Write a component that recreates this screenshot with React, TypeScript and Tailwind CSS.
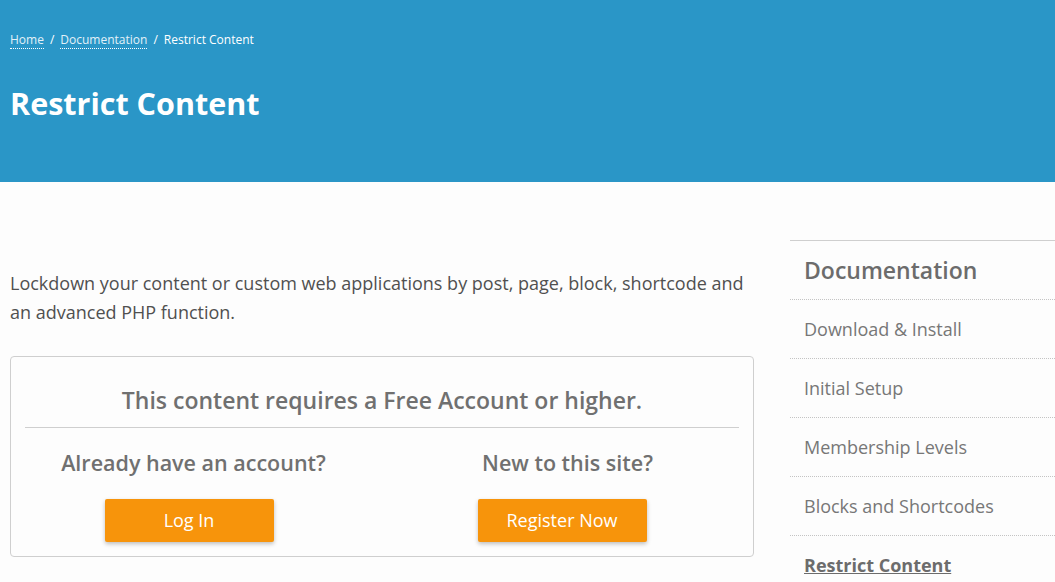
export default function App() {
  const docs = [
    "Download & Install",
    "Initial Setup",
    "Membership Levels",
    "Blocks and Shortcodes",
  ];

  return (
    <div className="min-h-[582px] bg-[#fdfdfd] font-['Open_Sans',sans-serif] text-[#6c6c6c] overflow-hidden">
      <header className="h-[182px] bg-[#2a96c7] px-[10px] pt-[31px]">
        <nav className="flex items-center gap-[6px] text-[12px] text-white">
          <a href="#" className="border-b border-dotted border-white text-[#e3f1f8] leading-[16px]">
            Home
          </a>
          <span>/</span>
          <a href="#" className="border-b border-dotted border-white text-[#e3f1f8] leading-[16px]">
            Documentation
          </a>
          <span>/</span>
          <span>Restrict Content</span>
        </nav>
        <h1 className="mt-[34px] text-[30.5px] font-bold leading-[40px] text-white">Restrict Content</h1>
      </header>

      <div className="flex pt-[58px]">
        <main className="w-[744px] ml-[10px] pt-[29px]">
          <p className="text-[18px] leading-[29px] text-[#505050]">
            Lockdown your content or custom web applications by post, page, block, shortcode and an advanced PHP
            function.
          </p>

          <div className="mt-[29px] h-[201px] rounded-[4px] border border-[#cfcfcf] px-[14px] pt-[26px]">
            <h2 className="text-center text-[23px] font-semibold leading-[34px] text-[#707070]">
              This content requires a Free Account or higher.
            </h2>
            <div className="mt-[10px] border-t border-[#cfcfcf]" />
            <div className="flex -mx-[14px]">
              <div className="flex w-1/2 flex-col items-center pt-[20px]">
                <h3 className="pr-[6px] text-[21.5px] font-semibold leading-[30px] text-[#707070]">
                  Already have an account?
                </h3>
                <button className="mt-[21px] mr-[15px] h-[43px] w-[169px] rounded-[2px] bg-[#f7940b] text-[18px] text-white shadow-[0_2px_4px_rgba(0,0,0,0.25)]">
                  Log In
                </button>
              </div>
              <div className="flex w-1/2 flex-col items-center pt-[20px]">
                <h3 className="text-[21.5px] font-semibold leading-[30px] text-[#707070]">New to this site?</h3>
                <button className="mt-[21px] mr-[11px] h-[43px] w-[169px] rounded-[2px] bg-[#f7940b] text-[18px] text-white shadow-[0_2px_4px_rgba(0,0,0,0.25)]">
                  Register Now
                </button>
              </div>
            </div>
          </div>
        </main>

        <aside className="ml-[36px] flex-1 border-t border-[#cfcfcf]">
          <h2 className="px-[14px] pt-[13px] pb-[12px] text-[23px] font-semibold leading-[33px] text-[#6c6c6c]">
            Documentation
          </h2>
          <ul>
            {docs.map((d) => (
              <li key={d} className="border-t border-dotted border-[#c4c4c4] px-[14px] h-[59px] flex items-center">
                <a href="#" className="text-[18px] text-[#777]">
                  {d}
                </a>
              </li>
            ))}
            <li className="border-t border-dotted border-[#c4c4c4] px-[14px] h-[59px] flex items-center">
              <a href="#" className="text-[18px] font-bold underline text-[#6c6c6c]">
                Restrict Content
              </a>
            </li>
          </ul>
        </aside>
      </div>
    </div>
  );
}
